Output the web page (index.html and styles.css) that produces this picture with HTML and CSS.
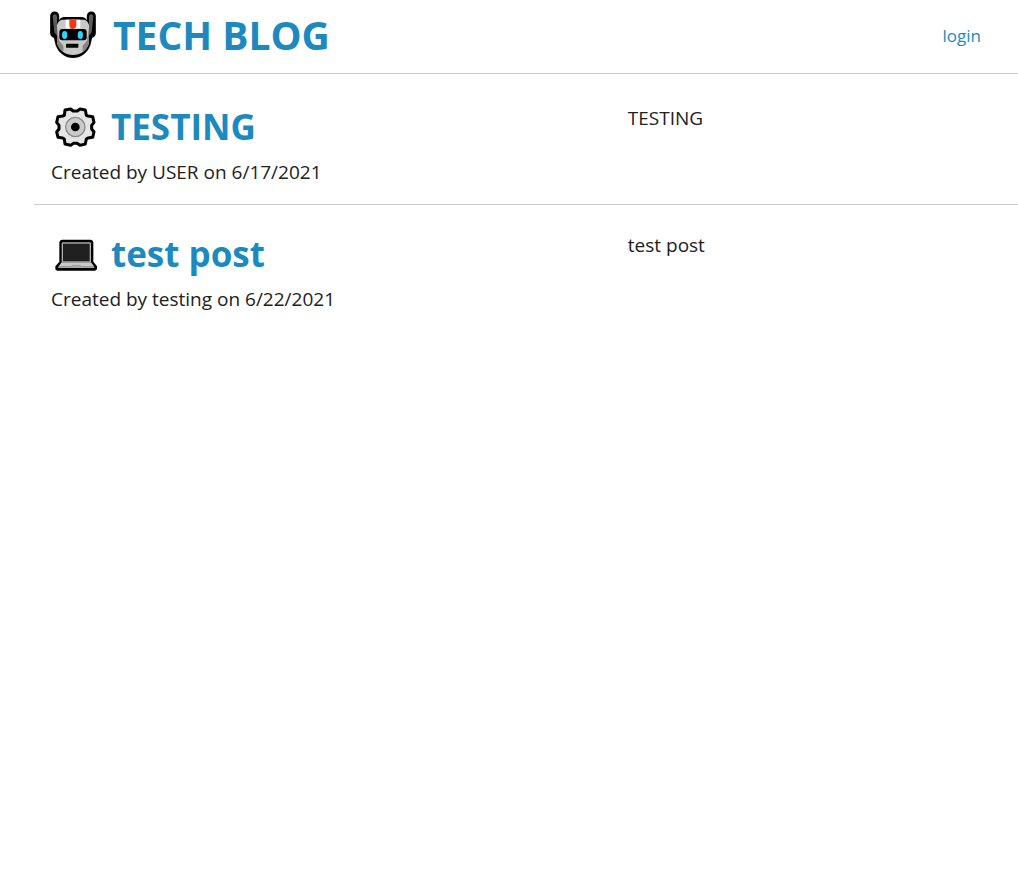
FILE: index.html
```html
<!DOCTYPE html>
<html lang="en">
<head>
<meta charset="utf-8">
<meta name="viewport" content="width=device-width, initial-scale=1">
<title>Tech Blog</title>
<link rel="stylesheet" href="styles.css">
</head>
<body>
<header class="site-header">
  <h1 class="site-title">
    <svg class="icon-robot" viewBox="18 21 144 144" aria-hidden="true">
      <path d="M35 36v52M145 36v52" stroke="#000" stroke-width="27" stroke-linecap="round"/>
      <path d="M28 82L152 82L142 124C132 150 112 162 90 162S48 150 38 124Z" fill="#000"/>
      <rect x="47" y="39" width="86" height="50" rx="16" fill="#000"/>
      <path d="M29 37a6 6 0 0 1 13 0v58l-8-10zM138 37a6 6 0 0 1 13 0l-5 48l-8 10z" fill="#5c5c5c"/>
      <path d="M56 47h68q10 3 14 16v50q-9 38-48 40q-39-2-48-40V63q4-13 14-16z" fill="#c8c8c8"/>
      <path d="M42 70v50q5 16 19 23v-18L48 110zM138 70v50q-5 16-19 23v-18l13-15z" fill="#858585"/>
      <path d="M68 47h44v26H68z" fill="#fff"/>
      <path d="M79 47h21v19q-2 9-10 10q-9-1-11-10z" fill="#f03a17"/>
      <rect x="49" y="75" width="82" height="34" rx="9" fill="#000"/>
      <ellipse cx="65" cy="93" rx="8" ry="12" fill="#31d2f7"/>
      <ellipse cx="112" cy="93" rx="8" ry="12" fill="#31d2f7"/>
      <rect x="69" y="119" width="37" height="12" rx="2" fill="#000"/>
    </svg>
    <a class="title-link" href="#">TECH BLOG</a>
  </h1>
  <nav class="site-nav"><a class="nav-link" href="#">login</a></nav>
</header>
<main class="posts">
  <article class="post">
    <div class="post-info">
      <h2 class="post-title">
        <svg class="icon-post" viewBox="18 18 129 129" aria-hidden="true">
          <path d="M51 30L68 27L75 33L88 33L96 27L112 30L115 46L120 48L134 50L138 67L131 76V87L138 96L134 112L120 114L115 117L112 132L96 136L87 130H76L68 136L51 132L49 117L44 114L30 112L26 96L33 87V76L26 67L30 50L44 48L49 46Z" fill="#e5e5e5" stroke="#000" stroke-width="9" stroke-linejoin="round"/>
          <circle cx="82" cy="81" r="29" fill="#cacaca" stroke="#8a8a8a" stroke-width="4"/>
          <circle cx="82" cy="81" r="13" fill="#000"/>
        </svg>
        <a class="title-link" href="#">TESTING</a>
      </h2>
      <p class="post-meta">Created by USER on 6/17/2021</p>
    </div>
    <p class="post-body">TESTING</p>
  </article>
  <article class="post">
    <div class="post-info">
      <h2 class="post-title">
        <svg class="icon-post" viewBox="18 9 129 129" aria-hidden="true">
          <path d="M42 29h86q7 1 8 8v58l11 14v7q-1 5-6 6H28q-6-1-6-6v-7l12-14V37q1-7 8-8z" fill="#000"/>
          <path d="M45 37h80q4 0 4 4v56H41V41q0-4 4-4z" fill="#adadad"/>
          <rect x="45" y="41" width="80" height="53" fill="#202020"/>
          <path d="M41 97h88l10 13H31z" fill="#c9c9c9"/>
          <path d="M31 110h108v4H31z" fill="#a9a9a9"/>
          <path d="M72 104h26l3 6H69z" fill="#a3a3a3"/>
        </svg>
        <a class="title-link" href="#">test post</a>
      </h2>
      <p class="post-meta">Created by testing on 6/22/2021</p>
    </div>
    <p class="post-body">test post</p>
  </article>
</main>
</body>
</html>
```
FILE: styles.css
```css
* {
  box-sizing: border-box;
  margin: 0;
  padding: 0;
}

body {
  background: #fff;
  color: #212121;
  font-family: "Segoe UI", "Open Sans", "Noto Sans", sans-serif;
  font-size: 19px;
  line-height: 28px;
}

.site-header {
  display: flex;
  justify-content: space-between;
  align-items: center;
  padding: 4px 37px 8px 49px;
  border-bottom: 1px solid #ccc;
}

.site-title {
  display: flex;
  align-items: center;
  gap: 16px;
  font-size: 39px;
  line-height: 61px;
}

.title-link,
.nav-link {
  color: #1d8abf;
  text-decoration: none;
}

.site-nav {
  padding-top: 2px;
}

.nav-link {
  font-size: 17px;
}

.icon-robot {
  width: 48px;
  height: 48px;
}

.posts {
  padding: 4px 0 0 34px;
}

.post {
  display: grid;
  grid-template-columns: 3fr 2fr;
  gap: 17px;
  padding: 26px 17px 18px;
}

.post + .post {
  border-top: 1px solid #ccc;
}

.post-title {
  display: flex;
  align-items: center;
  gap: 14px;
  padding-left: 3px;
  font-size: 35px;
  line-height: 46px;
  margin-bottom: 8px;
}

.icon-post {
  width: 43px;
  height: 43px;
}
```
